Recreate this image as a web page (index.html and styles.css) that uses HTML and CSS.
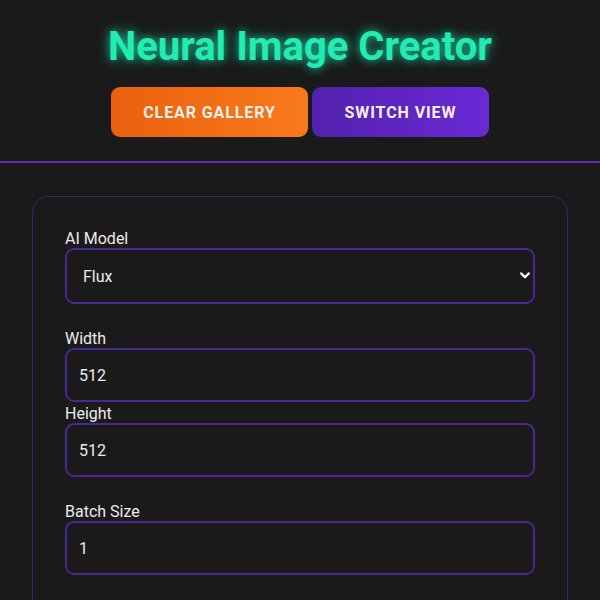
FILE: index.html
```html
<!DOCTYPE html>
<html lang="en">
<head>
<meta charset="utf-8">
<title>Neural Image Creator</title>
<link rel="stylesheet" href="styles.css">
</head>
<body>
<header class="header">
  <h1 class="title">Neural Image Creator</h1>
  <div class="actions">
    <button class="btn btn-orange">Clear Gallery</button>
    <button class="btn btn-purple">Switch View</button>
  </div>
</header>
<main class="main">
  <section class="card">
    <div class="group group-model">
      <label class="label" for="model">AI Model</label>
      <div class="select-wrap">
        <select id="model" class="field select">
          <option>Flux</option>
        </select>
        <svg class="chevron" width="10" height="7" viewBox="0 0 10 7"><path d="M1.2 1.4 L5 5.2 L8.8 1.4" fill="none" stroke="#ffffff" stroke-width="2.2" stroke-linecap="round" stroke-linejoin="round"/></svg>
      </div>
    </div>
    <div class="group group-size">
      <label class="label" for="w">Width</label>
      <input id="w" class="field input input-tight" type="text" value="512">
      <label class="label" for="h">Height</label>
      <input id="h" class="field input" type="text" value="512">
    </div>
    <div class="group">
      <label class="label" for="b">Batch Size</label>
      <input id="b" class="field input" type="text" value="1">
    </div>
  </section>
</main>
</body>
</html>
```

FILE: styles.css
```css
* { box-sizing: border-box; }
html, body { margin: 0; padding: 0; }
body {
  background: #1a1a1a;
  color: #e6e6e6;
  font-family: Roboto, "Noto Sans", "Liberation Sans", sans-serif;
  width: 600px;
  height: 600px;
  overflow: hidden;
}
.header {
  padding: 24px 0 24px;
  border-bottom: 2px solid #5a30b0;
  display: flex;
  flex-direction: column;
  align-items: center;
}
.title {
  margin: 0 0 17px;
  font-size: 40px;
  font-weight: 700;
  line-height: 46px;
  color: #22ecb4;
  text-shadow: 0 0 8px rgba(30, 235, 175, 0.75), 0 0 16px rgba(30, 235, 175, 0.35);
}
.actions {
  display: flex;
  gap: 4px;
}
.btn {
  height: 50px;
  border: none;
  border-radius: 9px;
  padding: 0;
  font-family: Roboto, "Liberation Sans", sans-serif;
  font-size: 16px;
  font-weight: 700;
  letter-spacing: 0.9px;
  text-transform: uppercase;
  color: #f5f0ea;
}
.btn-orange {
  width: 197px;
  background: linear-gradient(90deg, #e9610f, #f97a1c);
}
.btn-purple {
  width: 177px;
  background: linear-gradient(90deg, #5321ae, #6a2ad6);
}
.main {
  padding: 33px 32px 0;
}
.card {
  border: 1px solid #3a2468;
  border-radius: 16px;
  padding: 32px 32px 40px;
}
.group {
  display: flex;
  flex-direction: column;
}
.group-model, .group-size { margin-bottom: 25px; }
.label {
  display: block;
  font-size: 16px;
  line-height: 19px;
  color: #ececec;
}
.field {
  width: 100%;
  height: 54px;
  background: #1a1a1a;
  border: 2px solid #4b2793;
  border-radius: 9px;
  padding: 0 12px;
  font-family: Roboto, "Liberation Sans", sans-serif;
  font-size: 16px;
  color: #ececec;
  outline: none;
}
.input-tight { margin-bottom: 2px; }
.select-wrap { position: relative; }
.select {
  height: 56px;
  appearance: none;
  -webkit-appearance: none;
  padding: 0 16px;
}
.chevron {
  position: absolute;
  right: 5px;
  top: 24px;
  pointer-events: none;
}
```
